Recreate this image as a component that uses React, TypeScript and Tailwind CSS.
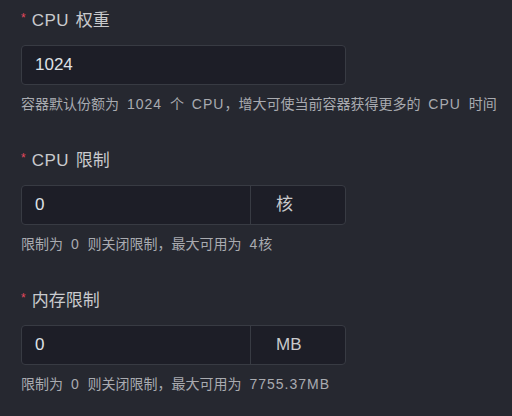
import React from "react";

const font = { fontFamily: '"Liberation Sans", "Noto Sans CJK SC", sans-serif' };

function Mixed({ text, latin }: { text: string; latin: string }) {
  const parts = text.match(/[\x21-\x7e]+|[^\x21-\x7e]+/g) || [];
  return (
    <>
      {parts.map((p, i) =>
        /^[\x21-\x7e]+$/.test(p) ? (
          <span key={i} className={latin}>
            {p}
          </span>
        ) : (
          <span key={i}>{p}</span>
        )
      )}
    </>
  );
}

function Field({ label, value, unit, help }: { label: string; value: string; unit?: string; help: string }) {
  return (
    <div className="flex flex-col">
      <div className="flex items-center h-[24px] text-[17px] text-[#c9cacd] whitespace-pre [word-spacing:2px]">
        <span className="text-[#e5485f] text-[12px] mr-[6px] -mt-[6px]">*</span>
        <span>
          <Mixed text={label} latin="tracking-[0.5px]" />
        </span>
      </div>
      <div className="mt-[12px] flex h-[40px] w-[325px] rounded-[4px] border border-[#383b43] bg-[#1d1e27] overflow-hidden">
        <div className="flex-1 flex items-center pl-[13px] text-[17px] text-[#dfe1e5]">{value}</div>
        {unit && (
          <div className="w-[95px] flex items-center pl-[25px] border-l border-[#383b43] text-[17px] text-[#c9cacd]">
            {unit}
          </div>
        )}
      </div>
      <div className="mt-[9px] h-[20px] flex items-center text-[14px] text-[#a9abb0] whitespace-pre [word-spacing:4px]">
        <span>
          <Mixed text={help} latin="tracking-[1px]" />
        </span>
      </div>
    </div>
  );
}

export default function App() {
  return (
    <div className="w-[512px] h-[416px] bg-[#262830] pl-[21px] pt-[9px] flex flex-col gap-[35px]" style={font}>
      <Field label="CPU 权重" value="1024" help="容器默认份额为 1024 个 CPU，增大可使当前容器获得更多的 CPU 时间" />
      <Field label="CPU 限制" value="0" unit="核" help="限制为 0 则关闭限制，最大可用为 4核" />
      <Field label="内存限制" value="0" unit="MB" help="限制为 0 则关闭限制，最大可用为 7755.37MB" />
    </div>
  );
}
